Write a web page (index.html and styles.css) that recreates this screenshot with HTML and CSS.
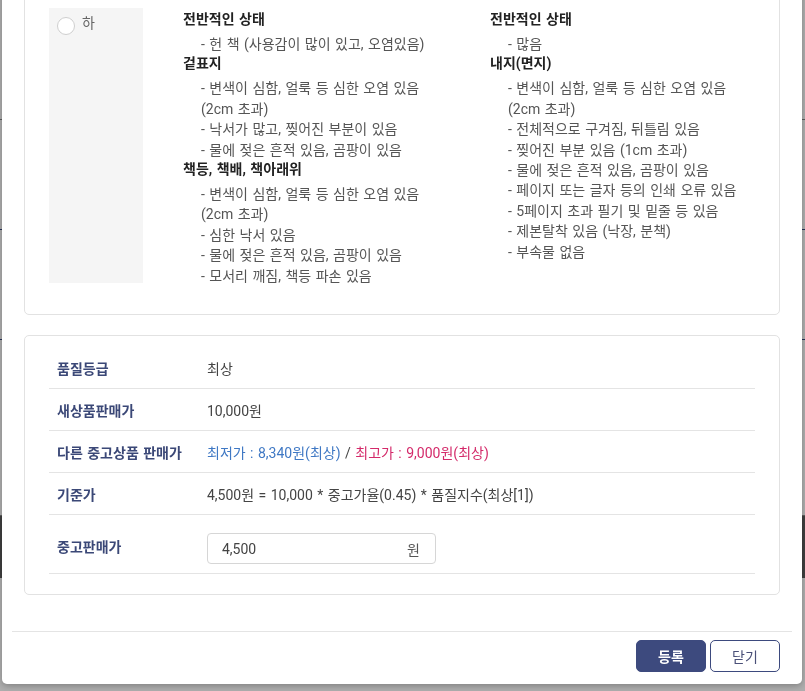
FILE: index.html
```html
<!DOCTYPE html>
<html lang="ko">
<head>
<meta charset="utf-8">
<title>중고상품 등록</title>
<link rel="stylesheet" href="styles.css">
</head>
<body>
<div class="page">
  <div class="page-row r1"></div>
  <div class="page-row r2"></div>
  <div class="page-row r3"></div>
  <div class="page-row r4"></div>
  <div class="page-band"></div>
</div>
<div class="overlay">
  <div class="modal">
    <div class="modal-body">
      <div class="card grade-card">
        <div class="grade-option">
          <span class="radio"></span>
          <span class="grade-label">하</span>
        </div>
        <div class="cond-col left">
          <div class="cond-title">전반적인 상태</div>
          <ul class="cond-list">
            <li>- 헌 책 (사용감이 많이 있고, 오염있음)</li>
          </ul>
          <div class="cond-title">겉표지</div>
          <ul class="cond-list">
            <li>- 변색이 심함, 얼룩 등 심한 오염 있음 (2cm 초과)</li>
            <li>- 낙서가 많고, 찢어진 부분이 있음</li>
            <li>- 물에 젖은 흔적 있음, 곰팡이 있음</li>
          </ul>
          <div class="cond-title">책등, 책배, 책아래위</div>
          <ul class="cond-list">
            <li>- 변색이 심함, 얼룩 등 심한 오염 있음 (2cm 초과)</li>
            <li>- 심한 낙서 있음</li>
            <li>- 물에 젖은 흔적 있음, 곰팡이 있음</li>
            <li>- 모서리 깨짐, 책등 파손 있음</li>
          </ul>
        </div>
        <div class="cond-col right">
          <div class="cond-title">전반적인 상태</div>
          <ul class="cond-list">
            <li>- 많음</li>
          </ul>
          <div class="cond-title">내지(면지)</div>
          <ul class="cond-list">
            <li>- 변색이 심함, 얼룩 등 심한 오염 있음 (2cm 초과)</li>
            <li>- 전체적으로 구겨짐, 뒤틀림 있음</li>
            <li>- 찢어진 부분 있음 (1cm 초과)</li>
            <li>- 물에 젖은 흔적 있음, 곰팡이 있음</li>
            <li>- 페이지 또는 글자 등의 인쇄 오류 있음</li>
            <li>- 5페이지 초과 필기 및 밑줄 등 있음</li>
            <li>- 제본탈착 있음 (낙장, 분책)</li>
            <li>- 부속물 없음</li>
          </ul>
        </div>
      </div>

      <div class="card price-card">
        <div class="price-row">
          <div class="price-label">품질등급</div>
          <div class="price-value">최상</div>
        </div>
        <div class="price-row">
          <div class="price-label">새상품판매가</div>
          <div class="price-value">10,000원</div>
        </div>
        <div class="price-row">
          <div class="price-label">다른 중고상품 판매가</div>
          <div class="price-value"><span class="low">최저가 : 8,340원(최상)</span> / <span class="high">최고가 : 9,000원(최상)</span></div>
        </div>
        <div class="price-row">
          <div class="price-label">기준가</div>
          <div class="price-value">4,500원 = 10,000 * 중고가율(0.45) * 품질지수(최상[1])</div>
        </div>
        <div class="price-row input-row">
          <div class="price-label">중고판매가</div>
          <div class="input-box">
            <input class="price-input" type="text" value="4,500">
            <span class="unit">원</span>
          </div>
        </div>
      </div>
    </div>
    <div class="modal-footer">
      <button class="btn btn-primary" type="button">등록</button>
      <button class="btn btn-outline" type="button">닫기</button>
    </div>
  </div>
</div>
</body>
</html>
```

FILE: styles.css
```css
* {
  box-sizing: border-box;
}

html, body {
  margin: 0;
  padding: 0;
  height: 100%;
  overflow: hidden;
}

body {
  font-family: Roboto, "Noto Sans CJK KR", sans-serif;
  font-size: 14px;
  word-spacing: 1px;
  color: #444;
  background: #ffffff;
}

/* page underneath the dialog */
.page {
  height: 691px;
  display: flex;
  flex-direction: column;
}

.page-row {
  border-bottom: 1px solid #8a8a8a;
}

.r1 { height: 120px; }
.r2 { height: 110px; border-bottom-color: #3a4a80; }
.r3 { height: 110px; border-bottom-color: #3a4a80; }
.r4 { height: 176px; }

.page-band {
  height: 62px;
  background: #5c5c5c;
}

/* dimmed overlay */
.overlay {
  position: fixed;
  inset: 0;
  background: rgba(0, 0, 0, 0.32);
}

.modal {
  position: absolute;
  left: 2px;
  bottom: 7px;
  width: 800px;
  background: #fff;
  border-radius: 5px;
  box-shadow: 0 2px 6px rgba(0, 0, 0, 0.25);
}

.modal-body {
  padding: 22px 22px 36px;
  display: flex;
  flex-direction: column;
  gap: 20px;
}

.card {
  border: 1px solid #e2e2e2;
  border-radius: 5px;
  background: #fff;
}

/* grade card */
.grade-card {
  display: flex;
  align-items: stretch;
  padding: 25px 24px 28px;
}

.grade-option {
  width: 94px;
  flex: none;
  background: #f5f5f5;
  padding: 9px 8px;
  display: flex;
  align-items: flex-start;
  margin-bottom: 3px;
}

.radio {
  width: 18px;
  height: 18px;
  border: 1px solid #cfcfcf;
  border-radius: 50%;
  background: #fff;
  flex: none;
}

.grade-label {
  margin-left: 7px;
  margin-top: -4px;
  line-height: 20px;
  color: #666;
}

.cond-col {
  padding-top: 2px;
  word-break: keep-all;
}

.cond-col.left {
  margin-left: 40px;
  width: 250px;
  flex: none;
}

.cond-col.right {
  margin-left: 57px;
  width: 255px;
  flex: none;
}

.cond-title {
  font-weight: 700;
  color: #222;
  line-height: 18px;
}

.cond-list {
  list-style: none;
  margin: 0;
  padding: 6px 0 0 18px;
}

.cond-list li {
  line-height: 20.4px;
  color: #555;
}

/* price card */
.price-card {
  padding: 11px 24px 20px;
}

.price-row {
  display: flex;
  align-items: center;
  height: 42px;
  padding-left: 8px;
  border-bottom: 1px solid #e4e4e4;
}

.price-label {
  width: 150px;
  flex: none;
  font-weight: 700;
  color: #3b4877;
}

.price-value {
  color: #444;
}

.low {
  color: #3f78c4;
}

.high {
  color: #d42a6a;
}

.input-row {
  height: 59px;
  padding-top: 18px;
  padding-bottom: 9px;
}

.input-row .price-label {
  margin-bottom: 5px;
}

.input-box {
  width: 229px;
  height: 31px;
  border: 1px solid #d6d6d6;
  border-radius: 4px;
  display: flex;
  align-items: center;
  padding: 0 15px 0 14px;
}

.price-input {
  flex: 1;
  min-width: 0;
  border: none;
  outline: none;
  padding: 0;
  font: inherit;
  color: #444;
  background: transparent;
}

.unit {
  color: #555;
}

/* footer */
.modal-footer {
  margin: 0 10px;
  border-top: 1px solid #e4e4e4;
  padding: 8px 12px 12px;
  display: flex;
  justify-content: flex-end;
  gap: 4px;
}

.btn {
  width: 70px;
  height: 32px;
  border-radius: 5px;
  font: inherit;
  font-size: 14px;
  cursor: pointer;
}

.btn-primary {
  background: #3d4a7e;
  border: 1px solid #3d4a7e;
  color: #fff;
  font-weight: 700;
}

.btn-outline {
  background: #fff;
  border: 1px solid #3d4a7e;
  color: #4a5078;
}
```
